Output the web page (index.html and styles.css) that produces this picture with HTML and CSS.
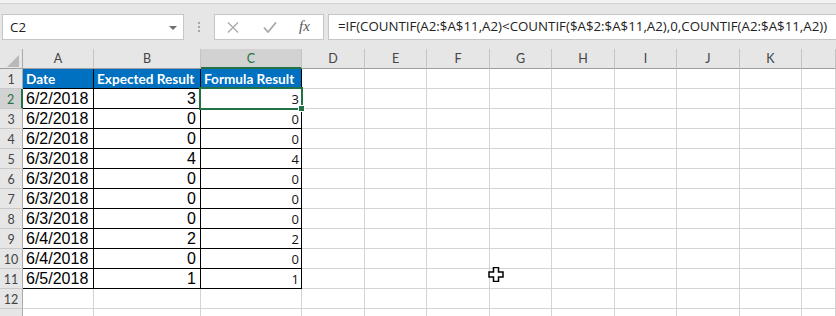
FILE: index.html
```html
<!doctype html>
<html lang="en">
  <head>
    <meta charset="UTF-8" />
    <title>Sheet1</title>
    <link rel="stylesheet" href="styles.css">
  </head>
  <body>
    <div class="topline"></div>
    <div class="formula-row">
      <div class="namebox">
        <span>C2</span>
        <span class="arrow"></span>
      </div>
      <div class="grip"><i></i><i></i><i></i></div>
      <div class="fxbtns">
        <svg class="cancel" width="12" height="11" viewBox="0 0 12 11">
          <path d="M1 0.5 L11 10.5 M11 0.5 L1 10.5" stroke="#a9a9a9" stroke-width="1.3" fill="none" />
        </svg>
        <svg class="enter" width="14" height="11" viewBox="0 0 14 11">
          <path d="M1 5.5 L5 10 L13 0.5" stroke="#a9a9a9" stroke-width="1.8" fill="none" />
        </svg>
        <span class="fx">fx</span>
      </div>
      <div class="formula">=IF(COUNTIF(A2:$A$11,A2)&lt;COUNTIF($A$2:$A$11,A2),0,COUNTIF(A2:$A$11,A2))</div>
    </div>

    <div class="sheet">
      <div class="corner"><span></span></div>
      <div class="ch">A</div><div class="ch">B</div><div class="ch sel">C</div><div class="ch">D</div><div class="ch">E</div><div class="ch">F</div><div class="ch">G</div><div class="ch">H</div><div class="ch">I</div><div class="ch">J</div><div class="ch">K</div><div class="ch"></div>

      <div class="rh">1</div><div class="t hd">Date</div><div class="t hd">Expected Result</div><div class="t hd">Formula Result</div><div></div><div></div><div></div><div></div><div></div><div></div><div></div><div></div><div></div>
      <div class="rh sel">2</div><div class="t date">6/2/2018</div><div class="t num">3</div><div class="t res">3</div><div></div><div></div><div></div><div></div><div></div><div></div><div></div><div></div><div></div>
      <div class="rh">3</div><div class="t date">6/2/2018</div><div class="t num">0</div><div class="t res">0</div><div></div><div></div><div></div><div></div><div></div><div></div><div></div><div></div><div></div>
      <div class="rh">4</div><div class="t date">6/2/2018</div><div class="t num">0</div><div class="t res">0</div><div></div><div></div><div></div><div></div><div></div><div></div><div></div><div></div><div></div>
      <div class="rh">5</div><div class="t date">6/3/2018</div><div class="t num">4</div><div class="t res">4</div><div></div><div></div><div></div><div></div><div></div><div></div><div></div><div></div><div></div>
      <div class="rh">6</div><div class="t date">6/3/2018</div><div class="t num">0</div><div class="t res">0</div><div></div><div></div><div></div><div></div><div></div><div></div><div></div><div></div><div></div>
      <div class="rh">7</div><div class="t date">6/3/2018</div><div class="t num">0</div><div class="t res">0</div><div></div><div></div><div></div><div></div><div></div><div></div><div></div><div></div><div></div>
      <div class="rh">8</div><div class="t date">6/3/2018</div><div class="t num">0</div><div class="t res">0</div><div></div><div></div><div></div><div></div><div></div><div></div><div></div><div></div><div></div>
      <div class="rh">9</div><div class="t date">6/4/2018</div><div class="t num">2</div><div class="t res">2</div><div></div><div></div><div></div><div></div><div></div><div></div><div></div><div></div><div></div>
      <div class="rh">10</div><div class="t date">6/4/2018</div><div class="t num">0</div><div class="t res">0</div><div></div><div></div><div></div><div></div><div></div><div></div><div></div><div></div><div></div>
      <div class="rh">11</div><div class="t date">6/5/2018</div><div class="t num">1</div><div class="t res">1</div><div></div><div></div><div></div><div></div><div></div><div></div><div></div><div></div><div></div>
      <div class="rh">12</div><div></div><div></div><div></div><div></div><div></div><div></div><div></div><div></div><div></div><div></div><div></div><div></div>
      <div class="rh"></div><div></div><div></div><div></div><div></div><div></div><div></div><div></div><div></div><div></div><div></div><div></div><div></div>

      <!-- active cell C2 -->
      <div class="selection"><span class="handle"></span></div>

      <svg class="cursor" width="16" height="15" viewBox="0 0 16 15">
        <path d="M5.5 0.5 H10.5 V5 H15 V10 H10.5 V14.5 H5.5 V10 H1 V5 H5.5 Z" fill="#fff" stroke="#000" stroke-width="1.5" />
      </svg>
    </div>
  </body>
</html>
```

FILE: styles.css
```css
body {
  margin: 0;
  background: #e6e6e6;
  overflow: hidden;
  font-family: "Open Sans", sans-serif;
}

.topline {
  height: 3px;
  background: #f3f3f3;
  border-bottom: 1px solid #d2d2d2;
}

.formula-row {
  display: flex;
  align-items: flex-start;
  height: 45px;
  padding-top: 10px;
  box-sizing: border-box;
  font-size: 13.3px;
  color: #222;
}

.namebox,
.fxbtns,
.formula {
  height: 26px;
  box-sizing: border-box;
  background: #fff;
  border: 1px solid #c6c6c6;
}

.namebox {
  margin-left: 2px;
  width: 182px;
  display: flex;
  align-items: center;
  justify-content: space-between;
  padding: 0 6px 0 7px;
}

.arrow {
  width: 0;
  height: 0;
  border-left: 4px solid transparent;
  border-right: 4px solid transparent;
  border-top: 4px solid #6d6d6d;
  margin-top: 1px;
}

.grip {
  width: 30px;
  height: 26px;
  display: flex;
  flex-direction: column;
  align-items: center;
  justify-content: center;
  gap: 2px;
}

.grip i {
  width: 2px;
  height: 2px;
  background: #a6a6a6;
}

.fxbtns {
  width: 110px;
  display: flex;
  align-items: center;
  padding-left: 12px;
}

.fxbtns .enter {
  margin-left: 24px;
}

.fx {
  margin-left: 22px;
  font-family: "Liberation Serif", serif;
  font-style: italic;
  font-size: 15px;
  color: #555;
  margin-top: -2px;
}

.formula {
  flex: 1;
  margin-left: 4px;
  border-right: none;
  padding-left: 9px;
  line-height: 23px;
  white-space: nowrap;
  overflow: hidden;
}

/* grid */
.sheet {
  position: relative;
  display: grid;
  grid-template-columns: 23px 71px 107px 101px 63px 62px 63px 62px 63px 62px 63px 62px 1fr;
  grid-auto-rows: 20px;
  font-family: Lato, sans-serif;
}

.sheet > div {
  box-sizing: border-box;
  background: #fff;
  border-right: 1px solid #d4d4d4;
  border-bottom: 1px solid #d4d4d4;
  line-height: 19px;
  white-space: nowrap;
  overflow: hidden;
}

.sheet > .corner {
  background: #e6e6e6;
  border-right: 1px solid #ababab;
  border-bottom: 1px solid #9e9e9e;
  position: relative;
}

.corner span {
  position: absolute;
  right: 3px;
  bottom: 1px;
  width: 0;
  height: 0;
  border-left: 12px solid transparent;
  border-bottom: 12px solid #b9b9b9;
}

.sheet > .ch {
  background: #e6e6e6;
  border-right: 1px solid #c4c4c4;
  border-bottom: 1px solid #9e9e9e;
  text-align: center;
  font-size: 12.5px;
  color: #444;
}

.sheet > .ch.sel {
  background: #d2d2d2;
  color: #217346;
  border-bottom: 2px solid #217346;
}

.sheet > .rh {
  background: #e6e6e6;
  border-right: 1px solid #ababab;
  border-bottom: 1px solid #c9c9c9;
  text-align: center;
  font-size: 12.5px;
  color: #444;
  padding-top: 1px;
}

.sheet > .rh.sel {
  background: #d2d2d2;
  color: #217346;
  border-right: 2px solid #217346;
}

.sheet > .t {
  border-right: 1px solid #000;
  border-bottom: 1px solid #000;
}

.sheet > .hd {
  background: #0070c0;
  color: #fff;
  font-weight: bold;
  font-size: 13.6px;
  padding: 1px 0 0 3px;
}

.sheet > .date {
  font-family: "Liberation Sans", Arial, sans-serif;
  font-size: 16px;
  padding-left: 3px;
}

.sheet > .num {
  font-family: "Liberation Sans", Arial, sans-serif;
  font-size: 16px;
  text-align: right;
  padding-right: 4px;
}

.sheet > .res {
  font-family: "Open Sans", sans-serif;
  font-size: 13px;
  line-height: 18px;
  color: #111;
  text-align: right;
  padding: 1px 2px 0 0;
}

.sheet > .selection {
  position: absolute;
  left: 199px;
  top: 38px;
  width: 104px;
  height: 23px;
  background: transparent;
  border: 2px solid #217346;
  overflow: visible;
}

.handle {
  position: absolute;
  right: -4px;
  bottom: -4px;
  width: 5px;
  height: 5px;
  background: #217346;
  border: 1px solid #fff;
}

.cursor {
  position: absolute;
  left: 488px;
  top: 218px;
}
```
